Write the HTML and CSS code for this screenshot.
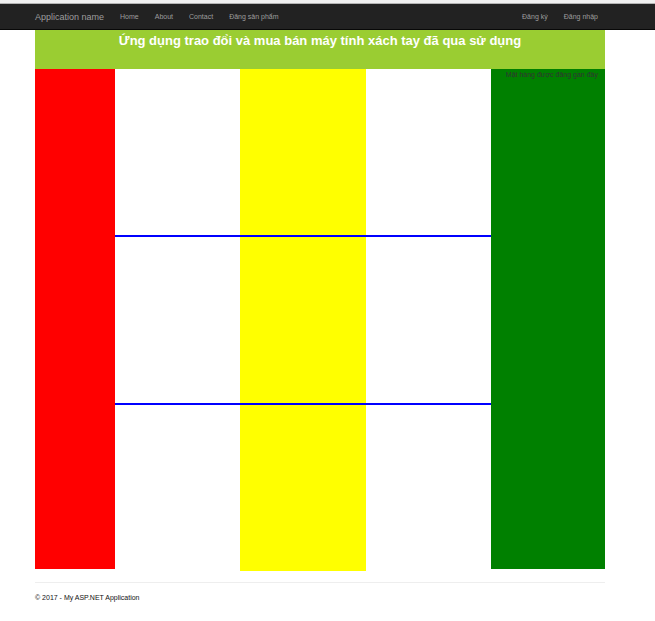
FILE: index.html
```html
<!DOCTYPE html>
<html lang="vi">
<head>
<meta charset="utf-8">
<meta name="viewport" content="width=device-width, initial-scale=1">
<title>My ASP.NET Application</title>
<link rel="stylesheet" href="styles.css">
</head>
<body>
<nav class="navbar">
  <div class="container navbar-inner">
    <a class="brand" href="#">Application name</a>
    <ul class="nav">
      <li><a href="#">Home</a></li>
      <li><a href="#">About</a></li>
      <li><a href="#">Contact</a></li>
      <li><a href="#">Đăng sản phẩm</a></li>
    </ul>
    <ul class="nav nav-right">
      <li><a href="#">Đăng ký</a></li>
      <li><a href="#">Đăng nhập</a></li>
    </ul>
  </div>
</nav>
<div class="container">
  <header class="banner">
    <h1>Ứng dụng trao đổi và mua bán máy tính xách tay đã qua sử dụng</h1>
  </header>
  <main class="content">
    <aside class="left"></aside>
    <section class="products">
      <div class="row"><div class="cell"></div><div class="cell highlight"></div><div class="cell"></div></div>
      <div class="row"><div class="cell"></div><div class="cell highlight"></div><div class="cell"></div></div>
      <div class="row"><div class="cell"></div><div class="cell highlight"></div><div class="cell"></div></div>
    </section>
    <aside class="right">Mặt hàng được đăng gần đây</aside>
  </main>
  <footer class="footer">
    <p>© 2017 - My ASP.NET Application</p>
  </footer>
</div>
</body>
</html>
```
FILE: styles.css
```css
* {
  box-sizing: border-box;
}

body {
  margin: 0;
  background: #fff;
  color: #333;
  font: 7px/10px "Liberation Sans", Arial, sans-serif;
  border-top: 3px solid #f0f0f0;
}

.container {
  margin: 0 50px 0 35px;
}

.navbar {
  background: #222;
  border-top: 1px solid #b4b4b4;
  border-bottom: 1px solid #080808;
}

.navbar-inner {
  display: flex;
  align-items: center;
  min-height: 25px;
}

.navbar a {
  color: #9d9d9d;
  text-decoration: none;
}

.brand {
  margin-right: 16px;
  font-size: 9px;
}

.nav {
  display: flex;
  gap: 16px;
  margin: 0;
  padding: 0;
  list-style: none;
}

.nav-right {
  margin-left: auto;
  padding-right: 7px;
}

.banner {
  min-height: 39px;
  background: yellowgreen;
  color: #fff;
  text-align: center;
}

.banner h1 {
  margin: 0;
  padding-top: 3px;
  font-size: 13px;
  line-height: 16px;
}

.content {
  display: grid;
  grid-template-columns: 14fr 66fr 20fr;
  align-items: start;
}

.left,
.right {
  min-height: 500px;
}

.left {
  background: red;
}

.right {
  padding: 1px 7px;
  background: green;
  text-align: right;
}

.row {
  display: grid;
  grid-template-columns: repeat(3, 1fr);
  border-bottom: 2px solid blue;
}

.row:last-child {
  border-bottom: 0;
}

.cell {
  min-height: 166px;
}

.highlight {
  background: yellow;
}

.footer {
  margin-top: 11px;
  border-top: 1px solid #eee;
  color: #111;
}

.footer p {
  margin: 10px 0;
}
```
